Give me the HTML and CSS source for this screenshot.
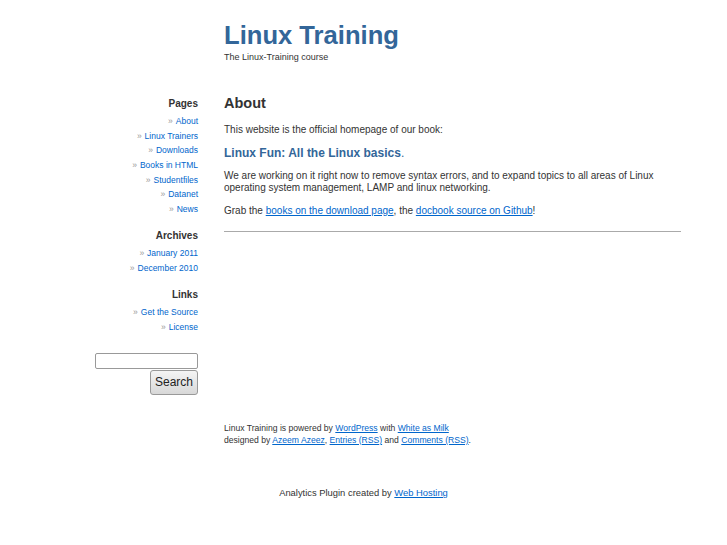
FILE: index.html
```html
<!DOCTYPE html>
<html lang="en">
<head>
    <meta charset="UTF-8">
    <title>Linux Training</title>
    <link rel="stylesheet" href="styles.css">
</head>
<body>

    <div class="wrapper">
        <div class="header">
            <h1><a href="#">Linux Training</a></h1>
            <div class="description">The Linux-Training course</div>
        </div>

        <div class="columns">
            <div class="sidebar">
                <h2>Pages</h2>
                <ul>
                    <li><a href="#">About</a></li>
                    <li><a href="#">Linux Trainers</a></li>
                    <li><a href="#">Downloads</a></li>
                    <li><a href="#">Books in HTML</a></li>
                    <li><a href="#">Studentfiles</a></li>
                    <li><a href="#">Datanet</a></li>
                    <li><a href="#">News</a></li>
                </ul>

                <h2>Archives</h2>
                <ul>
                    <li><a href="#">January 2011</a></li>
                    <li><a href="#">December 2010</a></li>
                </ul>

                <h2>Links</h2>
                <ul>
                    <li><a href="#">Get the Source</a></li>
                    <li><a href="#">License</a></li>
                </ul>

                <form class="searchform">
                    <input type="text" class="search-text">
                    <button type="button" class="search-btn">Search</button>
                </form>
            </div>

            <div class="content">
                <h2 class="post-title">About</h2>
                <p>This website is the official homepage of our book:</p>
                <p class="book"><a href="#">Linux Fun: All the Linux basics</a>.</p>
                <p>We are working on it right now to remove syntax errors, and to expand topics to all areas of Linux operating system management, LAMP and linux networking.</p>
                <p>Grab the <a href="#" class="ul">books on the download page</a>, the <a href="#" class="ul">docbook source on Github</a>!</p>
                <hr>
            </div>
        </div>

        <div class="footer">
            Linux Training is powered by <a href="#">WordPress</a> with <a href="#">White as Milk</a><br>
            designed by <a href="#">Azeem Azeez</a>, <a href="#">Entries (RSS)</a> and <a href="#">Comments (RSS)</a>.
        </div>
    </div>

    <div class="analytics">Analytics Plugin created by <a href="#">Web Hosting</a></div>

</body>
</html>
```

FILE: styles.css
```css
body {
    margin: 0;
    font-family: "Liberation Sans", Arial, sans-serif;
    color: #333;
    background: #fff;
}
a {
    color: #0066cc;
    text-decoration: none;
}
.wrapper {
    width: 635px;
    margin: 0 auto;
}
.header {
    padding: 20px 0 0 178px;
}
.header h1 {
    margin: 0;
    font-size: 25.6px;
    line-height: 30px;
}
.header h1 a {
    color: #336699;
}
.description {
    margin-top: 2px;
    font-size: 9px;
    line-height: 10px;
}
.columns {
    display: flex;
    margin-top: 33px;
}
.sidebar {
    width: 152px;
    padding-top: 1px;
    text-align: right;
}
.sidebar h2 {
    margin: 0 0 3px 0;
    padding-top: 1px;
    font-size: 10px;
    line-height: 14px;
}
.sidebar ul {
    list-style: none;
    margin: 0 0 11.5px 0;
    padding: 0;
}
.sidebar li {
    font-size: 8.5px;
    line-height: 14.67px;
}
.sidebar li:before {
    content: "\00bb";
    color: #999;
    margin-right: 3px;
}
.searchform {
    margin-top: 18.5px;
    display: flex;
    flex-direction: column;
    align-items: flex-end;
}
.search-text {
    width: 103px;
    height: 16px;
    box-sizing: border-box;
    border: 1px solid #999;
    border-radius: 2px;
    margin: 0 0 1px 0;
    padding: 1px 3px;
}
.search-btn {
    width: 48px;
    height: 25px;
    font-family: "Liberation Sans", Arial, sans-serif;
    font-size: 12px;
    color: #222;
    border: 1px solid #999;
    border-radius: 3px;
    background: linear-gradient(#f4f4f4, #d8d8d8);
    padding: 0;
}
.content {
    flex: 1;
    margin-left: 26px;
}
.post-title {
    margin: 0 0 12px 0;
    font-size: 14.5px;
    line-height: 17px;
}
.content p {
    margin: 0 0 11px 0;
    font-size: 10px;
    line-height: 12px;
}
.content p.book {
    font-size: 12px;
    line-height: 12px;
    color: #336699;
}
.book a {
    color: #336699;
    font-weight: bold;
}
a.ul, .footer a, .analytics a {
    text-decoration: underline;
}
.content hr {
    border: 0;
    border-top: 1px solid #aaa;
    margin: 14px 0 0 0;
    height: 0;
}
.footer {
    margin: 27px 0 0 178px;
    font-size: 8.6px;
    line-height: 12px;
}
.analytics {
    margin-top: 41px;
    text-align: center;
    font-size: 9.4px;
    line-height: 12px;
}
```
